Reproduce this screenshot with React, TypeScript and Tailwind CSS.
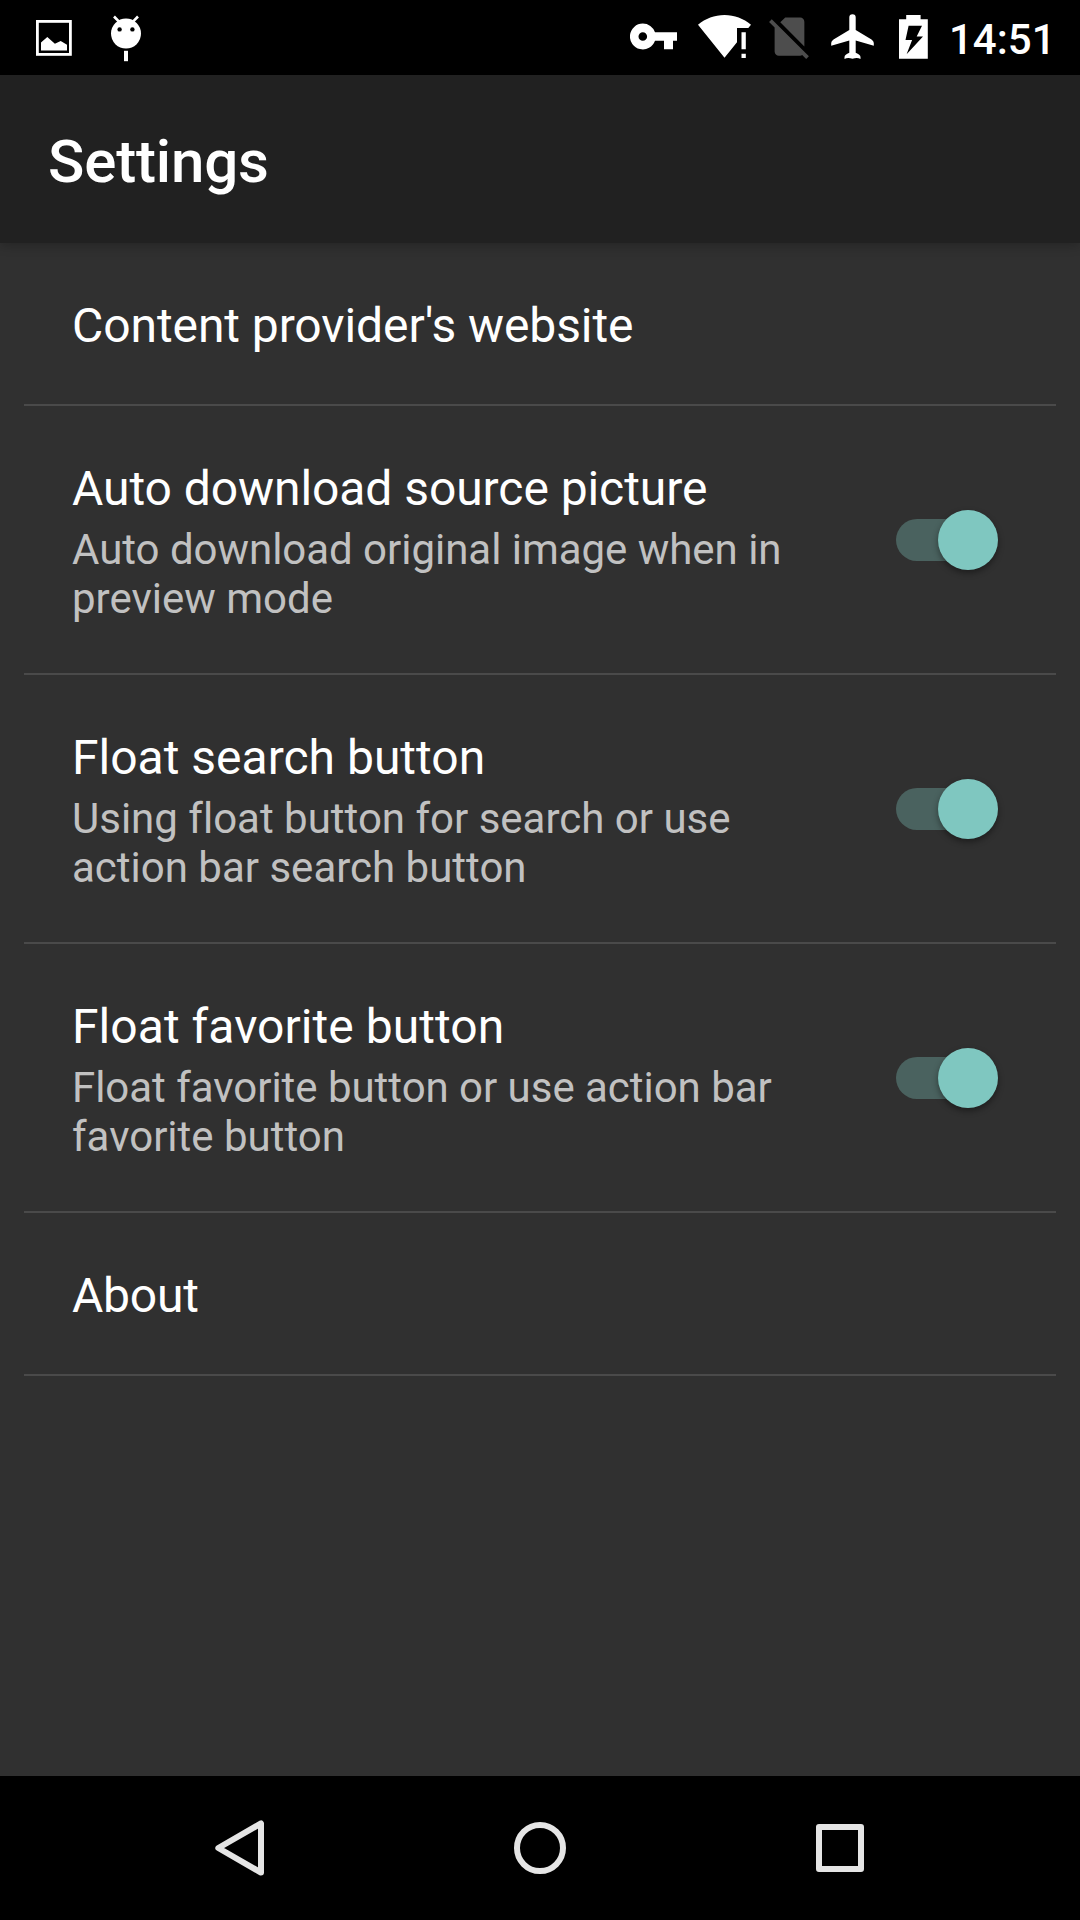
import type { ReactNode } from "react";

function StatusBar() {
  return (
    <header className="flex h-[75px] shrink-0 bg-black text-white">
      <svg className="ml-9 mt-5 h-9 w-9" viewBox="36 20 36 36">
        <rect x="37.4" y="21.4" width="33" height="33" fill="none" stroke="currentColor" strokeWidth="2.8" />
        <path d="M41 50.600V42.600L47.300 37l7.600 6.700 5.800-2.700 6.300 3.800v5.800z" fill="currentColor" />
      </svg>
      <svg className="ml-9 mt-3.5 h-12 w-9" viewBox="108 14 36 48">
        <path d="M114 16.500l5 5.200M138 16.500l-5 5.200" stroke="currentColor" strokeWidth="2.6" />
        <circle cx="126" cy="33.6" r="15" fill="currentColor" />
        <circle cx="119.6" cy="29.4" r="2.2" fill="black" />
        <circle cx="132.4" cy="29.4" r="2.2" fill="black" />
        <path d="M124 50.800h4v10.400h-4z" fill="currentColor" />
      </svg>
      <div className="grow" />
      <svg className="mt-5 h-8 w-12" viewBox="630 20 48 32" fill="currentColor">
        <path
          fillRule="evenodd"
          d="M642.800 23.600a12.900 12.900 0 1 0 12.200 17.200h9v8.500h9v-8.500h4v-8.500h-22a12.900 12.900 0 0 0-12.200-8.700zm0 8.600a4.300 4.300 0 1 1 0 8.600 4.300 4.300 0 0 1 0-8.600z"
        />
      </svg>
      <svg className="ml-[18px] mt-3 h-12 w-14" viewBox="696 12 56 48" fill="currentColor">
        <path d="M698 24.700C705.500 18.500 714.500 15 724.500 15s19 3.500 26.500 9.700l-2.700 3.300H737v14.200L724.500 57.700z" />
        <path d="M741.500 32.200h4.300v17h-4.300zM741.500 53.700h4.300v4.300h-4.300z" />
      </svg>
      <svg className="ml-3 mt-[11px] h-[51px] w-[51px] text-[#4d4d4d]" viewBox="0 0 24 24" fill="currentColor">
        <path d="M18.990 5c0-1.100-.890-2-1.990-2h-7L7.660 5.340 19 16.680 18.990 5zM3.650 3.880L2.380 5.150 5 7.770V19c0 1.100.900 2 2 2h10.010c.350 0 .670-.100.960-.260l1.880 1.880 1.270-1.270L3.650 3.880z" />
      </svg>
      <svg className="ml-[15px] mt-3 h-12 w-[46px]" viewBox="830 12 46 48" fill="currentColor">
        <path d="M849.300 17.500a3.200 3.200 0 0 1 6.400 0v12.500l15.800 9.500q2.300 1.500 2.300 3.500v2.800l-18.100-5.300v12.300q4.600 1.800 4.800 4.200v2q-3.200-2-8-.2q-4.800-1.800-8 .2v-2q.2-2.400 4.800-4.200v-12.300l-18.100 5.300v-2.800q0-2 2.300-3.500l15.800-9.500z" />
      </svg>
      <svg className="ml-[22px] mt-3 h-12 w-8" viewBox="898 12 32 48" fill="currentColor">
        <path
          fillRule="evenodd"
          d="M906.200 15h14.400v4.200h7.200v39.600h-28.800V19.200h7.200zM908.600 25.700L905.500 40h6.600l-5.500 14.300L923 36.500h-6.300l5.300-10.800z"
        />
      </svg>
      <time className="ml-[19px] mt-[15px] w-[131px] text-[42px] font-medium leading-[50px]">14:51</time>
    </header>
  );
}

function Switch() {
  return (
    <div role="switch" aria-checked="true" className="relative h-[60px] w-[102px] shrink-0">
      <div className="absolute left-0 top-[9.5px] h-[42px] w-[90px] rounded-full bg-[#4a625f]" />
      <div className="absolute right-[0.5px] top-0 size-[60px] rounded-full bg-[#7fc7c0] shadow-[0_3px_6px_rgba(0,0,0,0.4)]" />
    </div>
  );
}

function Row({ title, tracking = "" }: { title: string; tracking?: string }) {
  return (
    <li className="mx-6 h-[163px] border-b-2 border-[#4a4a4a] pl-12 pt-[55px]">
      <h2 className={`text-[48px] leading-[56px] ${tracking}`}>{title}</h2>
    </li>
  );
}

function SwitchRow({ title, tracking = "", children }: { title: string; tracking?: string; children: ReactNode }) {
  return (
    <li className="mx-6 flex h-[269px] justify-between border-b-2 border-[#4a4a4a] pl-12 pr-[58px]">
      <div className="pt-[55px]">
        <h2 className={`text-[48px] leading-[56px] ${tracking}`}>{title}</h2>
        <p className="mt-2 whitespace-nowrap text-[42px] leading-[49px] text-[#c1c1c1] [font-variant-ligatures:none]">
          {children}
        </p>
      </div>
      <div className="pt-[103.5px]">
        <Switch />
      </div>
    </li>
  );
}

function NavigationBar() {
  return (
    <nav className="flex h-36 shrink-0 items-center justify-center gap-[228px] bg-black text-[#e5e5e5]">
      <svg className="size-[72px]" viewBox="0 0 72 72" fill="none" stroke="currentColor" strokeWidth="6" strokeLinejoin="round">
        <path d="M14.300 36L57 11.400V60.600z" />
      </svg>
      <svg className="size-[72px]" viewBox="0 0 72 72" fill="none" stroke="currentColor" strokeWidth="6">
        <circle cx="36" cy="36" r="23" />
      </svg>
      <svg className="size-[72px]" viewBox="0 0 72 72" fill="none" stroke="currentColor" strokeWidth="6" strokeLinejoin="round">
        <path d="M15 15h42v42H15z" />
      </svg>
    </nav>
  );
}

export default function App() {
  return (
    <div className="flex h-[1920px] w-[1080px] flex-col overflow-hidden bg-[#303030] font-['Roboto',sans-serif] text-white">
      <StatusBar />
      <div className="h-[168px] shrink-0 bg-[#212121] pl-12 pt-[52px] shadow-[0_3px_10px_rgba(0,0,0,0.22)]">
        <h1 className="text-[60px] font-medium leading-[70px] tracking-[-0.15px]">Settings</h1>
      </div>
      <ul className="grow">
        <Row title="Content provider's website" tracking="tracking-[-0.08px]" />
        <SwitchRow title="Auto download source picture" tracking="tracking-[-0.07px]">
          <span className="tracking-[-0.03px]">Auto download original image when in</span>
          <br />
          preview mode
        </SwitchRow>
        <SwitchRow title="Float search button">
          Using float button for search or use
          <br />
          action bar search button
        </SwitchRow>
        <SwitchRow title="Float favorite button" tracking="tracking-[0.05px]">
          <span className="tracking-[-0.03px]">Float favorite button or use action bar</span>
          <br />
          favorite button
        </SwitchRow>
        <Row title="About" tracking="tracking-[-0.2px]" />
      </ul>
      <NavigationBar />
    </div>
  );
}
